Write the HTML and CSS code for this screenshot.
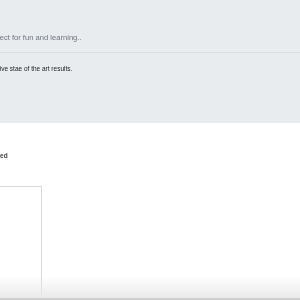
FILE: index.html
```html
<html>
  <head>
    <meta charset="utf-8" />
    <title>Hero</title>
    <link rel="stylesheet" href="styles.css">
  </head>
  <body>
    <div id="hero">
      <p class="lead">project for fun and learning..</p>
      <hr class="rule" />
      <p class="sub">to achive stae of the art results.</p>
    </div>
    <div id="main">
      <p class="label">Uploaded</p>
      <div class="box"></div>
    </div>
    <div id="fade"></div>
  </body>
</html>
```

FILE: styles.css
```css
html,
body {
  margin: 0;
  height: 100%;
  overflow: hidden;
  background: #fff;
  font-family: "Liberation Sans", Arial, sans-serif;
}

#hero,
#main {
  will-change: transform;
}

#hero {
  background-color: #e9ecef;
  height: 123px;
  padding-top: 33px;
  box-sizing: border-box;
}

.lead {
  margin: 0 0 0 -13px;
  font-size: 7.6px;
  line-height: 9px;
  color: #6c757d;
  white-space: nowrap;
}

.rule {
  margin: 10px 0 0 0;
  border: 0;
  border-top: 1px solid #dde0e3;
}

.sub {
  margin: 12px 0 0 -18px;
  font-size: 6.5px;
  line-height: 8px;
  color: #222;
  white-space: nowrap;
}

#main {
  padding-top: 29px;
}

.label {
  margin: 0 0 0 -22px;
  font-size: 6.5px;
  line-height: 8px;
  font-weight: bold;
  color: #444;
}

.box {
  margin: 26px 0 0 -90px;
  width: 130px;
  height: 114px;
  border: 1px solid #d9d9d9;
  border-bottom: 0;
}

#fade {
  position: fixed;
  left: 0;
  right: 0;
  bottom: 0;
  height: 22px;
  background: linear-gradient(rgba(240, 240, 240, 0), rgba(232, 232, 232, 0.9));
  border-bottom: 2px solid #cfcfcf;
}
```
